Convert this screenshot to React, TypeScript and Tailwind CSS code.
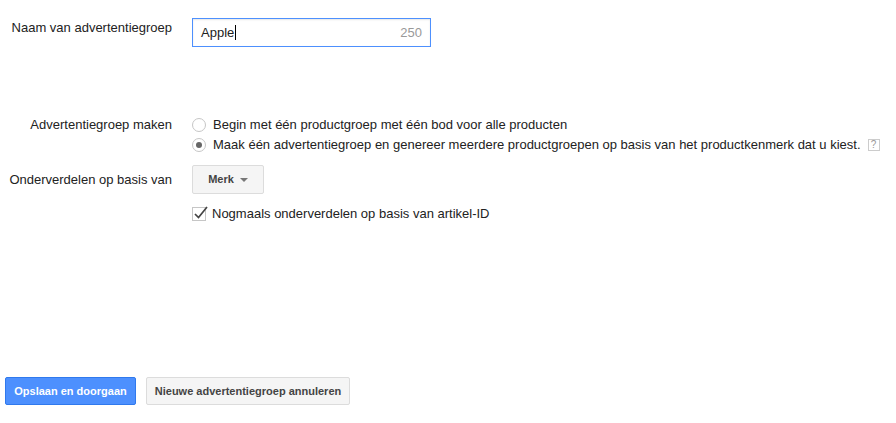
import React from 'react';

export default function App() {
  return (
    <div className="relative h-[423px] w-[896px] bg-white text-[13px] text-[#222] [font-family:Arial,'Liberation_Sans',sans-serif]">
      {/* Naam */}
      <div className="flex pt-[18px]">
        <div className="w-[172px] pt-[2px] text-right leading-[16px]">Naam van advertentiegroep</div>
        <div className="ml-[20px] flex h-[29px] w-[239px] items-center justify-between border border-[#4d90fe] px-[8px] shadow-[inset_0_1px_2px_rgba(0,0,0,0.1)]">
          <span className="flex items-center">
            Apple<span className="ml-[1px] inline-block h-[15px] w-px bg-black" />
          </span>
          <span className="text-[#999]">250</span>
        </div>
      </div>

      {/* Advertentiegroep maken */}
      <div className="mt-[70px] flex">
        <div className="w-[172px] text-right leading-[16px]">Advertentiegroep maken</div>
        <div className="ml-[20px] flex flex-col gap-[4px]">
          <div className="flex items-center leading-[16px]">
            <span className="h-[14px] w-[14px] rounded-full border border-[#c6c6c6] bg-white" />
            <span className="ml-[7px]">Begin met één productgroep met één bod voor alle producten</span>
          </div>
          <div className="flex items-center leading-[16px]">
            <span className="flex h-[14px] w-[14px] items-center justify-center rounded-full border border-[#c6c6c6] bg-white">
              <span className="h-[6px] w-[6px] rounded-full bg-[#666]" />
            </span>
            <span className="ml-[7px]">Maak één advertentiegroep en genereer meerdere productgroepen op basis van het productkenmerk dat u kiest.</span>
            <span className="ml-[7px] flex h-[12px] w-[12px] items-center justify-center border border-[#ccc] text-[10px] leading-none text-[#999]">?</span>
          </div>
        </div>
      </div>

      {/* Onderverdelen */}
      <div className="mt-[12px] flex items-center">
        <div className="w-[172px] text-right leading-[16px]">Onderverdelen op basis van</div>
        <div className="ml-[20px] flex h-[29px] w-[72px] items-center justify-center gap-[6px] rounded-[2px] border border-[#dcdcdc] bg-[#f5f5f5] text-[11px] font-bold text-[#444]">
          Merk
          <span className="h-0 w-0 border-x-[4px] border-t-[4px] border-x-transparent border-t-[#777]" />
        </div>
      </div>

      <div className="mt-[12px] flex items-center pl-[192px] leading-[16px]">
        <span className="relative h-[14px] w-[14px] border border-[#c6c6c6] bg-white">
          <svg viewBox="0 0 16 16" className="absolute left-0 top-[-3px] h-[16px] w-[16px]">
            <path d="M2 9 L5.5 12.5 L14 2" fill="none" stroke="#444" strokeWidth="1.7" />
          </svg>
        </span>
        <span className="ml-[6px]">Nogmaals onderverdelen op basis van artikel-ID</span>
      </div>

      {/* Buttons */}
      <div className="absolute left-[5px] top-[377px] flex gap-[10px]">
        <button className="h-[28px] w-[131px] rounded-[2px] border border-[#3079ed] bg-[#4d90fe] text-[11px] font-bold text-white">
          Opslaan en doorgaan
        </button>
        <button className="h-[28px] w-[204px] rounded-[2px] border border-[#dcdcdc] bg-[#f5f5f5] text-[11px] font-bold text-[#444]">
          Nieuwe advertentiegroep annuleren
        </button>
      </div>
    </div>
  );
}
